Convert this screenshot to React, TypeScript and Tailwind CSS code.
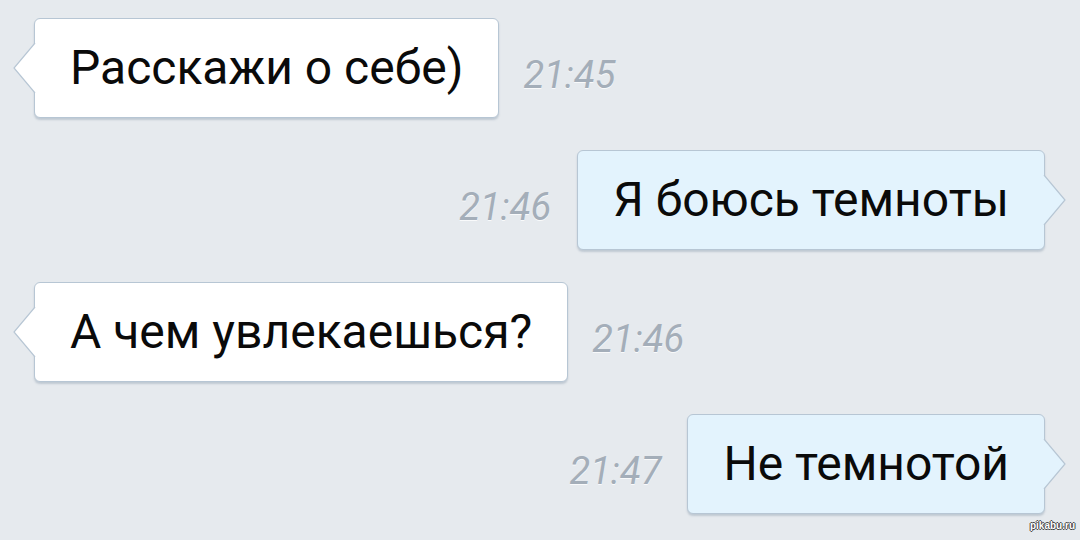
import React from "react";

const font = { fontFamily: "Roboto, 'Noto Sans', sans-serif" };

function Tail({ side, out }: { side: "left" | "right"; out: boolean }) {
  const fill = out ? "#e3f3fd" : "#ffffff";
  const stroke = "#b7c6d4";
  if (side === "left") {
    return (
      <svg
        width="24"
        height="50"
        viewBox="0 0 24 50"
        className="absolute left-[-22px] top-1/2 -translate-y-1/2"
      >
        <polygon points="24,0 22,0 1,25 22,50 24,50" fill={fill} />
        <polyline points="22,0 1,25 22,50" fill="none" stroke={stroke} strokeWidth="1.2" />
      </svg>
    );
  }
  return (
    <svg
      width="24"
      height="50"
      viewBox="0 0 24 50"
      className="absolute right-[-22px] top-1/2 -translate-y-1/2"
    >
      <polygon points="0,0 2,0 23,25 2,50 0,50" fill={fill} />
      <polyline points="2,0 23,25 2,50" fill="none" stroke={stroke} strokeWidth="1.2" />
    </svg>
  );
}

function Bubble({ text, out }: { text: string; out: boolean }) {
  return (
    <div
      className={`relative h-[100px] flex items-center px-[35px] rounded-[6px] border border-[#b7c6d4] shadow-[0_2px_2px_rgba(120,140,160,0.35)] ${
        out ? "bg-[#e3f3fd]" : "bg-white"
      }`}
    >
      <Tail side={out ? "right" : "left"} out={out} />
      <span className="text-[48px] leading-none text-[#0a0a0a] whitespace-nowrap" style={font}>
        {text}
      </span>
    </div>
  );
}

function Time({ t }: { t: string }) {
  return (
    <span
      className="text-[38px] italic leading-none text-[#a4aeb9] mt-[14px]"
      style={{ ...font, textShadow: "0 1px 0 rgba(255,255,255,0.8)" }}
    >
      {t}
    </span>
  );
}

export default function App() {
  const rows = [
    { text: "Расскажи о себе)", time: "21:45", out: false },
    { text: "Я боюсь темноты", time: "21:46", out: true },
    { text: "А чем увлекаешься?", time: "21:46", out: false },
    { text: "Не темнотой", time: "21:47", out: true },
  ];
  return (
    <div className="relative w-[1080px] h-[540px] bg-[#e6eaee] overflow-hidden flex flex-col gap-[32px] pt-[18px]">
      {rows.map((r, i) =>
        r.out ? (
          <div key={i} className="flex items-center justify-end gap-[26px] pr-[35px]">
            <Time t={r.time} />
            <Bubble text={r.text} out />
          </div>
        ) : (
          <div key={i} className="flex items-center justify-start gap-[24px] pl-[34px]">
            <Bubble text={r.text} out={false} />
            <Time t={r.time} />
          </div>
        )
      )}
      <span
        className="absolute right-[5px] bottom-[9px] text-[10px] font-bold text-white leading-none"
        style={{
          fontFamily: "'Liberation Sans', Arial, sans-serif",
          textShadow:
            "1px 0 0 #444, -1px 0 0 #444, 0 1px 0 #444, 0 -1px 0 #444",
        }}
      >
        pikabu.ru
      </span>
    </div>
  );
}
